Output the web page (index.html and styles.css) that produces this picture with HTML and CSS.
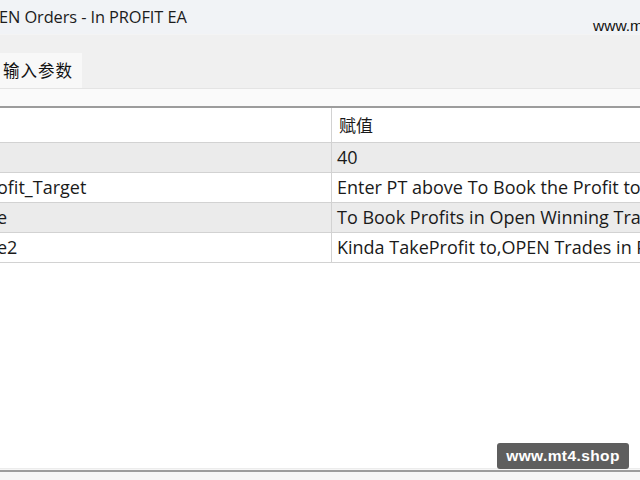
FILE: index.html
```html
<!DOCTYPE html>
<html lang="zh">
<head>
<meta charset="utf-8">
<title>Inputs</title>
<link rel="stylesheet" href="styles.css">
</head>
<body>
<div class="window">
  <div class="titlebar"><span class="title">EN Orders - In PROFIT EA</span></div>
  <div class="tabstrip">
    <div class="tab">输入参数</div>
  </div>
  <div class="tabpanel-top"></div>
  <div class="sep"></div>
  <div class="grid">
    <div class="cell head name"></div>
    <div class="cell head value">赋值</div>
    <div class="cell name shaded"></div>
    <div class="cell value shaded">40</div>
    <div class="cell name"><span class="cut">ofit_Target</span></div>
    <div class="cell value">Enter PT above To Book the Profit to</div>
    <div class="cell name shaded"><span class="cut">e</span></div>
    <div class="cell value shaded">To Book Profits in Open Winning Trades</div>
    <div class="cell name"><span class="cut">e2</span></div>
    <div class="cell value">Kinda TakeProfit to,OPEN Trades in Profit</div>
  </div>
  <div class="fill"></div>
  <div class="bottombar"></div>
  <div class="mark-top">www.mt4.shop</div>
  <div class="mark">www.mt4.shop</div>
</div>
</body>
</html>
```
FILE: styles.css
```css
html, body {
  margin: 0;
  padding: 0;
  width: 640px;
  height: 480px;
  overflow: hidden;
  background: #ffffff;
}
.window {
  position: relative;
  width: 640px;
  height: 480px;
  display: flex;
  flex-direction: column;
  overflow: hidden;
  font-family: "Open Sans", "Noto Sans", "Noto Sans CJK SC", sans-serif;
  color: #1a1a1a;
}
.titlebar {
  height: 34px;
  flex: none;
  background: #f1f3f6;
  display: flex;
  align-items: flex-start;
}
.title {
  font-size: 16.4px;
  line-height: 20px;
  margin-top: 7px;
  margin-left: -1px;
  color: #1c1c1c;
  letter-spacing: -0.1px;
}
.tabstrip {
  height: 54px;
  flex: none;
  background: #f0f0f0;
  display: flex;
  align-items: flex-end;
  border-top: 1px solid #f4f4f4;
  box-sizing: border-box;
}
.tab {
  width: 82px;
  height: 35px;
  background: #f8f8f8;
  box-sizing: border-box;
  padding-left: 3px;
  font-family: "Noto Sans CJK SC", sans-serif;
  font-size: 16.5px;
  line-height: 34px;
  letter-spacing: 1px;
  color: #111;
}
.tabpanel-top {
  height: 18px;
  flex: none;
  background: #fafafa;
  border-top: 1px solid #e4e4e4;
  box-sizing: border-box;
}
.sep {
  height: 2px;
  flex: none;
  background: #9c9c9c;
}
.grid {
  display: grid;
  grid-template-columns: 331px 1fr;
  grid-template-rows: 35px;
  grid-auto-rows: 30px;
  flex: none;
}
.cell {
  font-size: 18px;
  line-height: 29px;
  border-bottom: 1px solid #d2d2d2;
  white-space: nowrap;
  overflow: hidden;
  color: #1a1a1a;
}
.cell.head {
  height: 35px;
  line-height: 35px;
  box-sizing: border-box;
}
.cell.value {
  border-left: 1px solid #d2d2d2;
  padding-left: 5px;
}
.cell.head.value {
  font-family: "Noto Sans CJK SC", sans-serif;
  font-size: 17px;
  padding-left: 7px;
  line-height: 33px;
}
.cell.name {
  padding-left: 0;
}
.cut {
  display: inline-block;
  margin-left: -3px;
}
.shaded {
  background: #ebebeb;
}
.fill {
  flex: 1;
  background: #ffffff;
}
.bottombar {
  height: 12px;
  flex: none;
  background: #f6f6f6;
  border-top: 1px solid #ececec;
  box-sizing: border-box;
}
.bottombar::before {
  content: "";
  display: block;
  height: 2px;
  margin-top: 1px;
  background: #9c9c9c;
}
.mark {
  position: absolute;
  left: 497px;
  top: 443px;
  width: 132px;
  height: 26px;
  background: #5e5e5e;
  border-radius: 3px;
  color: #ffffff;
  font-family: "Liberation Sans", Arial, sans-serif;
  font-weight: bold;
  font-size: 15.5px;
  line-height: 26px;
  text-align: center;
  letter-spacing: 0.4px;
}
.mark-top {
  position: absolute;
  left: 593px;
  top: 17px;
  color: #111;
  font-family: "Liberation Sans", Arial, sans-serif;
  font-size: 15.5px;
  line-height: 18px;
  white-space: nowrap;
}
```
